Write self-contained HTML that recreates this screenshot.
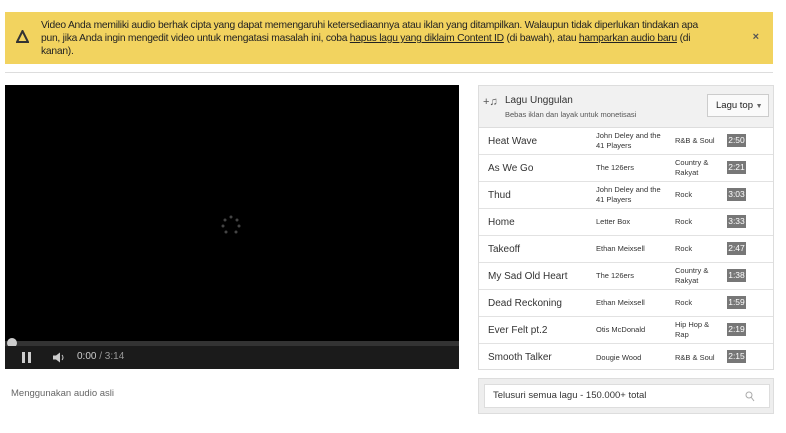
<!DOCTYPE html>
<html><head><meta charset="utf-8"><style>
*{margin:0;padding:0;box-sizing:border-box}
body{width:786px;height:433px;background:#fff;font-family:"Liberation Sans",sans-serif;position:relative;overflow:hidden;color:#333}
.ban{position:absolute;left:5px;top:12px;width:768px;height:52px;background:#f2d35f;font-size:10.3px;line-height:13px;color:#222}
.ban .t{position:absolute;left:36px;top:7px;width:666px;letter-spacing:-0.25px}
.ban u{text-decoration:underline}
.ban .x{position:absolute;right:14px;top:19px;font-size:11px;font-weight:bold;color:#555}
.hr{position:absolute;left:5px;top:72px;width:768px;height:1px;background:#ddd}
.vid{position:absolute;left:5px;top:85px;width:454px;height:284px;background:#000}
.bar{position:absolute;left:0;top:256px;width:454px;height:5px;background:#333}
.knob{position:absolute;left:2px;top:253px;width:10px;height:10px;border-radius:50%;background:#ccc}
.ctl{position:absolute;left:0;top:261px;width:454px;height:23px;background:#1b1b1b;color:#ccc;font-size:10px}
.pnl{position:absolute;left:478px;top:85px;width:296px;height:285px;border:1px solid #ddd}
.hd{height:42px;background:#f1f1f1;border-bottom:1px solid #ddd;position:relative}
.row{height:27px;border-bottom:1px solid #e2e2e2;position:relative;font-size:9px}
.row:last-child{border-bottom:none}
.c1{position:absolute;left:9px;top:8px;font-size:10px;color:#333}
.c2,.c3{position:absolute;font-size:7.5px;line-height:10px;color:#333;top:50%;transform:translateY(-50%)}
.c2{left:117px}.c3{left:196px}
.d{position:absolute;left:248px;top:6px;width:19px;height:13px;background:#777;color:#fff;font-size:8.5px;line-height:13px;text-align:center}
.srch{position:absolute;left:478px;top:378px;width:296px;height:36px;background:#eee;border:1px solid #ddd}
.srch div{position:absolute;left:5px;top:5px;width:286px;height:24px;background:#fff;border:1px solid #ddd;font-size:9.5px;line-height:22px;padding-left:8px;color:#333}
</style></head><body>
<div class="ban">
<svg style="position:absolute;left:11px;top:18px" width="13" height="13" viewBox="0 0 13 13"><path d="M6.5 1L12 12H1Z" fill="none" stroke="#333" stroke-width="2"/></svg>
<div class="t">Video Anda memiliki audio berhak cipta yang dapat memengaruhi ketersediaannya atau iklan yang ditampilkan. Walaupun tidak diperlukan tindakan apa pun, jika Anda ingin mengedit video untuk mengatasi masalah ini, coba <u>hapus lagu yang diklaim Content ID</u> (di bawah), atau <u>hamparkan audio baru</u> (di kanan).</div>
<div class="x">×</div></div>
<div class="hr"></div>
<div class="vid">
<svg style="position:absolute;left:216px;top:130px" width="20" height="20" viewBox="0 0 20 20"><g fill="#444"><circle cx="10" cy="2" r="1.5"/><circle cx="16" cy="5" r="1.5"/><circle cx="18" cy="11" r="1.5"/><circle cx="15" cy="17" r="1.5"/><circle cx="4" cy="5" r="1.5"/><circle cx="2" cy="11" r="1.5"/><circle cx="5" cy="17" r="1.5"/></g></svg>
<div class="bar"></div><div class="knob"></div>
<div class="ctl">
<div style="position:absolute;left:17px;top:6px;width:3px;height:11px;background:#ccc"></div>
<div style="position:absolute;left:23px;top:6px;width:3px;height:11px;background:#ccc"></div>
<svg style="position:absolute;left:47px;top:6px" width="16" height="11" viewBox="0 0 16 11"><path d="M1 3.5h3l4-3v10l-4-3H1z" fill="#ccc"/><path d="M10 3q2 2.5 0 5" stroke="#ccc" fill="none"/></svg>
<span style="position:absolute;left:72px;top:5px">0:00 <span style="color:#999">/ 3:14</span></span>
</div></div>
<div style="position:absolute;left:11px;top:388px;font-size:9.5px;color:#666">Menggunakan audio asli</div>
<div class="pnl">
<div class="hd">
<span style="position:absolute;left:4px;top:10px;font-size:11px;color:#555">+♫</span>
<div style="position:absolute;left:26px;top:9px;font-size:10px;color:#333">Lagu Unggulan</div>
<div style="position:absolute;left:26px;top:24px;font-size:7.5px;color:#555">Bebas iklan dan layak untuk monetisasi</div>
<div style="position:absolute;left:228px;top:8px;width:62px;height:23px;background:#fafafa;border:1px solid #ccc;font-size:9.5px;line-height:21px;padding-left:8px;color:#222">Lagu top <span style="font-size:7px;color:#666">▼</span></div>
</div>
<div class="row"><span class="c1">Heat Wave</span><span class="c2">John Deley and the<br>41 Players</span><span class="c3">R&amp;B &amp; Soul</span><span class="d">2:50</span></div>
<div class="row"><span class="c1">As We Go</span><span class="c2">The 126ers</span><span class="c3">Country &amp;<br>Rakyat</span><span class="d">2:21</span></div>
<div class="row"><span class="c1">Thud</span><span class="c2">John Deley and the<br>41 Players</span><span class="c3">Rock</span><span class="d">3:03</span></div>
<div class="row"><span class="c1">Home</span><span class="c2">Letter Box</span><span class="c3">Rock</span><span class="d">3:33</span></div>
<div class="row"><span class="c1">Takeoff</span><span class="c2">Ethan Meixsell</span><span class="c3">Rock</span><span class="d">2:47</span></div>
<div class="row"><span class="c1">My Sad Old Heart</span><span class="c2">The 126ers</span><span class="c3">Country &amp;<br>Rakyat</span><span class="d">1:38</span></div>
<div class="row"><span class="c1">Dead Reckoning</span><span class="c2">Ethan Meixsell</span><span class="c3">Rock</span><span class="d">1:59</span></div>
<div class="row"><span class="c1">Ever Felt pt.2</span><span class="c2">Otis McDonald</span><span class="c3">Hip Hop &amp;<br>Rap</span><span class="d">2:19</span></div>
<div class="row"><span class="c1">Smooth Talker</span><span class="c2">Dougie Wood</span><span class="c3">R&amp;B &amp; Soul</span><span class="d">2:15</span></div>
</div>
<div class="srch"><div>Telusuri semua lagu - 150.000+ total<svg style="position:absolute;right:14px;top:6px" width="10" height="11" viewBox="0 0 10 11"><circle cx="4" cy="4" r="3" fill="none" stroke="#aaa"/><path d="M6 6l3 4" stroke="#aaa"/></svg></div></div>
</body></html>
